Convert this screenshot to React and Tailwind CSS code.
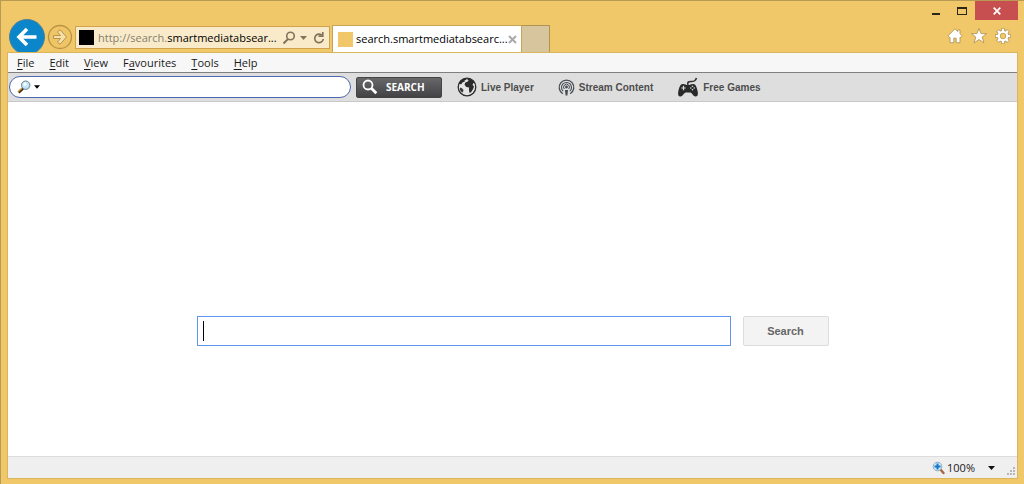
import React from "react";

function BackIcon() {
  return (
    <svg width="36" height="36" viewBox="0 0 36 36" aria-hidden="true">
      <circle cx="18" cy="18" r="17.5" fill="#0b86cb" stroke="#4f7f96" strokeWidth="1" />
      <path d="M27.500 18H10M18 10L10 18l8 8" fill="none" stroke="#fff" strokeWidth="3.600" />
    </svg>
  );
}

function ForwardIcon() {
  return (
    <svg width="26" height="26" viewBox="0 0 26 26" aria-hidden="true">
      <circle cx="13" cy="13" r="11.500" fill="#efc566" stroke="#b99345" strokeWidth="1.300" />
      <path d="M6.500 11.500h7l-3-3.500 1.500-1.800h1.500l6 6.800-6 6.800H12l-1.500-1.800 3-3.500h-7z" fill="#f6dfa8" stroke="#b8934a" strokeWidth="1" />
    </svg>
  );
}

function GlobeIcon() {
  return (
    <svg width="20" height="20" viewBox="0 0 20 20" aria-hidden="true">
      <circle cx="10" cy="10" r="8.800" fill="#e4e4e4" stroke="#2b2b2b" strokeWidth="1.300" />
      <path d="M2 7C3 4 5.500 1.300 9 1.300l.5 1.500-2 .8.3 1-2.300.9-1 1.500-1.500.3z" fill="#2b2b2b" />
      <path d="M10.500 1.200c3 .2 5.800 2 7.300 4.700l-1.300.2-1 1.700 1.500 2-1.200 2.700-1.800 2.800-1.500.7-.6-3.300.2-2.300-2.800-.4-1.800-2.300.8-2.300 2.500-.9.8-1.500-1.500-.5z" fill="#2b2b2b" />
      <path d="M3 10.500l2 .8 1.500 1.700-.6 2.200-1 .3L3 13z" fill="#3b3b3b" />
    </svg>
  );
}

function StreamIcon() {
  return (
    <svg width="17" height="17" viewBox="0 0 17 17" fill="none" stroke="#454b54" aria-hidden="true">
      <path d="M4.800 14.700a7.300 7.300 0 1 1 7.400 0" strokeWidth="1.300" />
      <path d="M5.200 12.200a5 5 0 1 1 6.600 0" strokeWidth="1.100" />
      <path d="M6.300 10a2.900 2.900 0 1 1 4.400 0" strokeWidth="1" />
      <circle cx="8.500" cy="8" r="1.400" fill="#454b54" stroke="none" />
      <path d="M7 11h3l-.6 5.500H7.600z" fill="#454b54" stroke="none" />
    </svg>
  );
}

function GameIcon() {
  return (
    <svg width="22" height="20" viewBox="0 0 22 20" aria-hidden="true">
      <path d="M11 8C10 4.500 12 4.500 14 4.500c3.500.2 4.500-.8 5.500-3.500" fill="none" stroke="#333" strokeWidth="1.700" />
      <path d="M5.500 7C8 6.500 8.500 8 11 8s3-1.500 5.500-1c2.500.4 3.300 3.500 4.200 7.500.7 3.700-.5 5-2.300 5-2 0-2.700-3-5-4H8.600c-2.300 1-3 4-5 4-1.800 0-3-1.300-2.300-5C2.200 10.500 3 7.400 5.500 7z" fill="#292929" />
      <path d="M6.500 8.800v4.400M4.300 11h4.400" stroke="#d9d9d9" strokeWidth="1.200" />
      <g fill="#d9d9d9"><circle cx="15.500" cy="9.300" r=".8" /><circle cx="15.500" cy="12.700" r=".8" /><circle cx="13.800" cy="11" r=".8" /><circle cx="17.200" cy="11" r=".8" /></g>
    </svg>
  );
}

function LensIcon({ zoom }) {
  return (
    <svg width="14" height="14" viewBox="0 0 14 14" className="shrink-0" aria-hidden="true">
      {zoom ? (
        <g>
          <path d="M8 8l3.500 4" stroke="#a7663d" strokeWidth="2.400" strokeLinecap="round" />
          <circle cx="5.500" cy="5.500" r="4.300" fill="#d6ebfa" stroke="#8aabc6" />
          <path d="M5.500 2.500v6M2.500 5.500h6" stroke="#1776c5" strokeWidth="2" />
        </g>
      ) : (
        <g>
          <path d="M6 8.500l-4.500 4" stroke="#3a2a14" strokeWidth="2.600" />
          <path d="M5 8.300l-4 3.600" stroke="#d99a32" strokeWidth="1.200" />
          <circle cx="8.700" cy="5.200" r="4.200" fill="#bfe6fa" stroke="#6d7f8c" />
          <circle cx="8" cy="4.200" r="1.600" fill="#fff" />
        </g>
      )}
    </svg>
  );
}

function Caret({ className }) {
  return (
    <svg width="7" height="4" viewBox="0 0 7 4" className={className} aria-hidden="true">
      <path d="M0 0h7L3.500 4z" fill="currentColor" />
    </svg>
  );
}

function Header() {
  return (
    <header className="flex h-[51px] justify-between overflow-hidden">
      <div className="flex items-start pl-[2px] pt-[18px]">
        <button aria-label="Back" className="shrink-0"><BackIcon /></button>
        <button aria-label="Forward" className="ml-[2px] mt-[5px] shrink-0"><ForwardIcon /></button>
        <div className="ml-[2px] mt-[7px] flex h-[23px] w-[255px] items-center border border-[#cfa44d] bg-[#f9ebca] pl-[3px] pr-1">
          <span className="size-[15px] shrink-0 bg-black" />
          <div className="ml-1 flex-1 whitespace-nowrap text-[11px] leading-4 text-black"><span className="text-[#85806f]">http://search.</span>smartmediatabsear...</div>
          <button aria-label="Search address">
            <svg width="14" height="14" viewBox="0 0 14 14" fill="none" stroke="#80745a" aria-hidden="true"><circle cx="8.500" cy="5" r="3.800" strokeWidth="1.600" /><path d="M6 8l-4.500 4.500" strokeWidth="2" /></svg>
          </button>
          <button aria-label="Show history" className="ml-1"><Caret className="text-[#80745a]" /></button>
          <button aria-label="Refresh" className="ml-[6px]">
            <svg width="12" height="14" viewBox="0 0 12 14" fill="none" stroke="#80745a" strokeWidth="1.700" aria-hidden="true"><path d="M8.800 4.100A4.300 4.300 0 1 0 10.300 8" /><path d="M9.800 1v4.200H5.500" /></svg>
          </button>
        </div>
        <div className="ml-[2px] mt-[6px] flex h-[27px] w-[190px] items-center border border-b-0 border-[#c5a455] bg-white pl-[5px] pr-1">
          <span className="size-[15px] shrink-0 bg-[#f0c869]" />
          <span className="ml-[3px] flex-1 whitespace-nowrap text-[11px] leading-4 text-black">search.smartmediatabsearc...</span>
          <button aria-label="Close tab">
            <svg width="9" height="9" viewBox="0 0 9 9" stroke="#aaa" strokeWidth="2" aria-hidden="true"><path d="M1 1l7 7M8 1L1 8" /></svg>
          </button>
        </div>
        <button aria-label="New tab" className="mt-[6px] h-[27px] w-7 border border-b-0 border-l-0 border-[#b09353] bg-[#d6c59d]" />
      </div>
      <div className="flex flex-col items-end">
        <div className="flex h-[19px] items-center">
          <button aria-label="Minimise" className="flex h-full w-[26px] items-center justify-center"><span className="mt-[6px] h-[2px] w-2 bg-[#2b2619]" /></button>
          <button aria-label="Maximise" className="flex h-full w-[26px] items-center justify-center"><span className="h-[8px] w-[10px] border border-t-2 border-[#2b2619]" /></button>
          <button aria-label="Close" className="flex h-full w-[43px] items-center justify-center bg-[#c84f4f]">
            <svg width="8" height="8" viewBox="0 0 8 8" stroke="#fff" strokeWidth="1.700" aria-hidden="true"><path d="M.7.7l6.600 6.600M7.300.7L.7 7.300" /></svg>
          </button>
        </div>
        <div className="mt-2 flex gap-2 pr-[7px]">
          <button aria-label="Home">
            <svg width="16" height="16" viewBox="0 0 16 16" aria-hidden="true"><path d="M8 .8L1 7.800l1.700 1.700.3-.2v5.400h3.800v-4.500h2.400v4.500H13V9.300l.3.200L15 7.800l-2-2V2h-2.300v1.500z" fill="#fff" stroke="#a98d50" strokeWidth=".8" /></svg>
          </button>
          <button aria-label="Favourites">
            <svg width="16" height="16" viewBox="0 0 16 16" fill="#fff" stroke="#a98d50" strokeWidth=".8" aria-hidden="true"><path d="M8 .5l2 5.100h5.500L11.200 9l1.700 5.900L8 11.500l-4.900 3.400L4.800 9 .5 5.600H6z" /></svg>
          </button>
          <button aria-label="Settings">
            <svg width="16" height="16" viewBox="0 0 16 16" fill="none" aria-hidden="true">
              <g stroke="#a98d50" strokeWidth="3.800"><path d="M8 .3v15.400M.3 8h15.400M2.500 2.500l11 11M13.500 2.500l-11 11" /></g>
              <circle cx="8" cy="8" r="6" fill="#a98d50" />
              <g stroke="#fff" strokeWidth="2.400"><path d="M8 .8v14.400M.8 8h14.400M2.900 2.900l10.200 10.200M13.100 2.900L2.900 13.100" /></g>
              <circle cx="8" cy="8" r="4.100" fill="#efc869" stroke="#fff" strokeWidth="2.400" />
              <circle cx="8" cy="8" r="2.800" fill="#efc869" stroke="#a98d50" strokeWidth=".6" />
            </svg>
          </button>
        </div>
      </div>
    </header>
  );
}

const menus = [
  ["", "F", "ile"],
  ["", "E", "dit"],
  ["", "V", "iew"],
  ["F", "a", "vourites"],
  ["", "T", "ools"],
  ["", "H", "elp"],
];

const links = [
  { label: "Live Player", icon: <GlobeIcon /> },
  { label: "Stream Content", icon: <StreamIcon /> },
  { label: "Free Games", icon: <GameIcon /> },
];

export default function App() {
  return (
    <div className="flex min-h-screen flex-col border-l border-t border-[#b99a55] bg-[#f0c869] pb-[5px] pl-[6px] pr-[6px] font-['Open_Sans','Noto_Sans',sans-serif]">
      <Header />
      <div className="flex flex-1 flex-col border border-t-[#dbb55c] border-[#dbb55c] bg-white">
        <nav className="flex h-[20px] items-center gap-[15px] border-b border-[#808080] bg-[#f7f7f7] pl-[9px] text-[11px] leading-4 text-[#1a1a1a]">
          {menus.map(([before, key, after]) => (
            <button key={before + key + after}>{before}<span className="underline underline-offset-2">{key}</span>{after}</button>
          ))}
        </nav>
        <div className="flex h-[29px] items-center border-b border-[#c9c9c9] bg-[#dedede] pl-px font-['Liberation_Sans',sans-serif]">
          <div className="flex h-[22px] w-[342px] items-center rounded-full border border-[#4d68b0] bg-white pl-[7px]">
            <button aria-label="Search provider" className="flex items-center gap-[3px]"><LensIcon /><Caret className="w-[6px] text-black" /></button>
            <input aria-label="Toolbar search" className="ml-1 min-w-0 flex-1 bg-transparent text-[12px] outline-none" />
          </div>
          <button className="ml-[5px] flex h-[21px] w-[86px] items-center rounded-xs border border-[#444] bg-linear-to-b from-[#68686a] to-[#434345] pl-[5px] font-['Open_Sans',sans-serif] text-[10px] font-bold text-white">
            <svg width="16" height="16" viewBox="0 0 16 16" fill="none" stroke="#fff" aria-hidden="true"><circle cx="6" cy="6" r="4.500" strokeWidth="1.800" /><path d="M9.300 9.300l5 5" strokeWidth="2.800" /></svg>
            <span className="ml-2">SEARCH</span>
          </button>
          <div className="ml-[15px] flex items-center gap-6">
            {links.map((l) => (
              <a key={l.label} href="#" className="flex items-center gap-1 text-[10px] font-bold text-[#4d4d4d]">{l.icon}{l.label}</a>
            ))}
          </div>
        </div>
        <main className="flex-1 px-6 pt-[214px]">
          <form className="mx-auto flex max-w-[632px] gap-3" onSubmit={(e) => e.preventDefault()}>
            <div className="relative flex-1">
              <input aria-label="Search" className="block h-[30px] w-full border border-[#5f97f0] bg-white px-2 text-[14px] outline-none" />
              <span className="absolute left-[6px] top-[5px] h-5 w-px bg-black" />
            </div>
            <button className="h-[30px] w-[86px] rounded-xs border border-[#dcdcdc] bg-[#f3f3f3] font-['Liberation_Sans',sans-serif] text-[11px] font-bold text-[#666]">Search</button>
          </form>
        </main>
        <footer className="flex h-[22px] items-center justify-end border-t border-[#dcdcdc] bg-[#efefef] text-[11px] leading-4 text-[#1a1a1a]">
          <button className="flex items-center gap-px"><LensIcon zoom />100%<Caret className="ml-3 text-[#111]" /></button>
          <svg width="9" height="9" viewBox="0 0 9 9" fill="#b8b8b8" className="ml-3 mr-px mt-2" aria-hidden="true"><path d="M6 0h2v2H6zM3 3h2v2H3zM6 3h2v2H6zM0 6h2v2H0zM3 6h2v2H3zM6 6h2v2H6z" /></svg>
        </footer>
      </div>
    </div>
  );
}
